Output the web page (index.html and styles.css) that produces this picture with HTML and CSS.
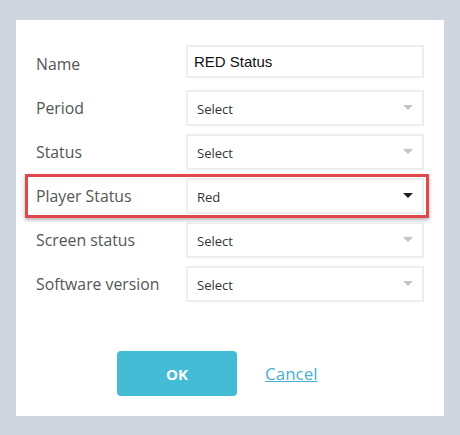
FILE: index.html
```html
<!DOCTYPE html>
<html lang="en">
<head>
    <meta charset="UTF-8">
    <meta name="viewport" content="width=device-width, initial-scale=1.0">
    <title>Edit Status</title>
    <link rel="stylesheet" href="styles.css">
</head>
<body>

    <div class="dialog">
        <div class="fields">
            <div class="row row-name">
                <label class="label">Name</label>
                <div class="text-input">RED Status</div>
            </div>
            <div class="row">
                <label class="label">Period</label>
                <div class="select">Select<span class="arrow"></span></div>
            </div>
            <div class="row">
                <label class="label">Status</label>
                <div class="select">Select<span class="arrow"></span></div>
            </div>
            <div class="row row-highlight">
                <label class="label">Player Status</label>
                <div class="select">Red<span class="arrow arrow-dark"></span></div>
            </div>
            <div class="row">
                <label class="label">Screen status</label>
                <div class="select">Select<span class="arrow"></span></div>
            </div>
            <div class="row">
                <label class="label">Software version</label>
                <div class="select">Select<span class="arrow"></span></div>
            </div>
        </div>

        <div class="actions">
            <button type="button" class="btn-ok">OK</button>
            <a href="#" class="cancel">Cancel</a>
        </div>
    </div>

</body>
</html>
```

FILE: styles.css
```css
body {
    margin: 0;
    padding: 20px 16px 19px;
    background: #cfd6dd;
    font-family: 'Open Sans', sans-serif;
}

.dialog {
    background: #ffffff;
    padding: 25px 20px 20px;
    height: 351px;
}

.fields {
    display: flex;
    flex-direction: column;
    gap: 8px;
}

.row {
    display: flex;
    align-items: center;
}

.row-name {
    margin-bottom: 4px;
}

.row-name .label {
    padding-top: 4px;
}

.label {
    width: 150px;
    flex-shrink: 0;
    font-size: 15.8px;
    color: #555;
}

.text-input {
    box-sizing: border-box;
    width: 238px;
    height: 33px;
    border: 2px solid #eeeeee;
    padding: 0 6px;
    display: flex;
    align-items: center;
    font-family: 'Liberation Sans', Arial, sans-serif;
    font-size: 15px;
    color: #111;
}

.select {
    box-sizing: border-box;
    width: 238px;
    height: 36px;
    border: 2px solid #eeeeee;
    padding: 2px 9px 0;
    display: flex;
    align-items: center;
    justify-content: space-between;
    font-size: 13px;
    color: #333;
}

.arrow {
    width: 0;
    height: 0;
    border-left: 5.5px solid transparent;
    border-right: 5.5px solid transparent;
    border-top: 5px solid #c4c4c4;
    margin-top: -3px;
}

.arrow-dark {
    border-top-color: #222;
}

.row-highlight {
    border: 3px solid #e2474b;
    padding: 1px 2px 1px 8px;
    margin: -4px -5px -4px -11px;
    box-shadow: 0 2px 4px rgba(0, 0, 0, 0.3);
}

.actions {
    display: flex;
    align-items: center;
    gap: 28px;
    margin: 49px 0 0 81px;
}

.btn-ok {
    width: 120px;
    height: 45px;
    border: none;
    border-radius: 4px;
    background: #45bcd5;
    color: #fff;
    font-family: 'Open Sans', sans-serif;
    font-weight: bold;
    font-size: 15px;
}

.cancel {
    color: #4aaed0;
    font-size: 17px;
    text-decoration: underline;
}
```
